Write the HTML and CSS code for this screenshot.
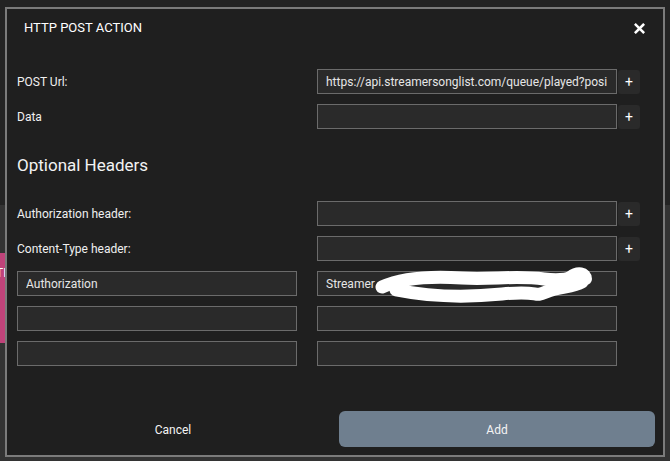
FILE: index.html
```html
<!DOCTYPE html>
<html lang="en">
<head>
<meta charset="utf-8">
<title>HTTP POST Action</title>
<link rel="stylesheet" href="styles.css">
</head>
<body>
<div class="backdrop">
  <div class="backdrop-top"></div>
  <div class="backdrop-tab">TI</div>
  <div class="backdrop-right"></div>
</div>

<div class="dialog">
  <div class="dialog-head">
    <span class="dialog-title">HTTP POST ACTION</span>
    <button class="close" type="button" aria-label="Close">
      <svg width="11" height="11" viewBox="0 0 11 11"><path d="M1.8 1.8 L9.2 9.2 M9.2 1.8 L1.8 9.2" stroke="#fff" stroke-width="2.6" stroke-linecap="square"/></svg>
    </button>
  </div>

  <div class="form">
    <div class="row">
      <label class="label">POST Url:</label>
      <input class="field" type="text" value="https://api.streamersonglist.com/queue/played?posi">
      <button class="plus" type="button">+</button>
    </div>
    <div class="row">
      <label class="label">Data</label>
      <input class="field" type="text" value="">
      <button class="plus" type="button">+</button>
    </div>

    <h2 class="section">Optional Headers</h2>

    <div class="row">
      <label class="label">Authorization header:</label>
      <input class="field" type="text" value="">
      <button class="plus" type="button">+</button>
    </div>
    <div class="row">
      <label class="label">Content-Type header:</label>
      <input class="field" type="text" value="">
      <button class="plus" type="button">+</button>
    </div>

    <div class="pair">
      <input class="field key" type="text" value="Authorization">
      <div class="value-wrap">
        <input class="field" type="text" value="Streamer">
        <svg class="redact" width="222" height="38" viewBox="0 0 222 38">
          <path d="M8 22 C28 13 58 11 88 13 S 140 10 170 14 S 198 8 210 12" fill="none" stroke="#fff" stroke-width="13" stroke-linecap="round" stroke-linejoin="round"/>
          <path d="M22 25 C52 31 88 33 128 29 S 158 33 172 27 S 198 23 208 17" fill="none" stroke="#fff" stroke-width="13" stroke-linecap="round" stroke-linejoin="round"/>
          <path d="M196 12 C204 6 212 8 212 14" fill="none" stroke="#fff" stroke-width="12" stroke-linecap="round"/>
        </svg>
      </div>
    </div>
    <div class="pair">
      <input class="field key" type="text" value="">
      <input class="field" type="text" value="">
    </div>
    <div class="pair">
      <input class="field key" type="text" value="">
      <input class="field" type="text" value="">
    </div>
  </div>

  <div class="actions">
    <button class="btn cancel" type="button">Cancel</button>
    <button class="btn add" type="button">Add</button>
  </div>
</div>
</body>
</html>
```

FILE: styles.css
```css
* {
  box-sizing: border-box;
}

html, body {
  margin: 0;
  padding: 0;
}

body {
  width: 670px;
  height: 461px;
  overflow: hidden;
  background: #333333;
  font-family: Roboto, "Liberation Sans", Arial, sans-serif;
  color: #f2f2f2;
  position: relative;
  padding: 7px 5px 0 5px;
}

/* page behind the modal */
.backdrop-top {
  position: absolute;
  left: 0;
  top: 0;
  width: 670px;
  height: 205px;
  background: #232323;
}

.backdrop-tab {
  position: absolute;
  left: 0;
  top: 253px;
  width: 5px;
  height: 90px;
  background: #c0437a;
  color: #fff;
  font-size: 12px;
  line-height: 40px;
  text-indent: -4px;
  white-space: nowrap;
  overflow: hidden;
}

.backdrop-right {
  position: absolute;
  right: 0;
  top: 240px;
  width: 5px;
  height: 221px;
  background: #333333;
}

.dialog {
  position: relative;
  width: 660px;
  height: 450px;
  border: 2px solid #7b7b7b;
  background: #1f1f1f;
  display: flex;
  flex-direction: column;
}

.dialog-head {
  display: flex;
  align-items: center;
  justify-content: space-between;
  height: 16px;
  margin: 11px 18px 0 17px;
}

.dialog-title {
  font-size: 13px;
  line-height: 16px;
  color: #ffffff;
}

.close {
  background: none;
  border: 0;
  padding: 0;
  width: 11px;
  height: 11px;
  display: flex;
}

.form {
  margin: 33px 0 0 10px;
  display: flex;
  flex-direction: column;
  gap: 10px;
}

.row {
  display: flex;
  align-items: center;
  height: 25px;
}

.label {
  width: 300px;
  font-size: 12px;
  color: #f0f0f0;
}

.field {
  width: 300px;
  height: 25px;
  border: 1px solid #6b6b6b;
  background: #2a2a2a;
  color: #e6e6e6;
  font-family: Roboto, "Liberation Sans", Arial, sans-serif;
  font-size: 12px;
  padding: 0 8px;
  outline: none;
}

.field.key {
  width: 280px;
  margin-right: 20px;
}

.plus {
  width: 22px;
  height: 24px;
  margin-left: 1px;
  border: 0;
  border-radius: 3px;
  background: #2a2a2a;
  color: #ffffff;
  font-family: Roboto, "Liberation Sans", Arial, sans-serif;
  font-size: 14px;
  font-weight: normal;
  line-height: 24px;
  padding: 0;
}

.section {
  margin: 16px 0 16px 0;
  font-size: 17px;
  font-weight: normal;
  line-height: 20px;
  color: #f2f2f2;
}

.pair {
  display: flex;
  height: 25px;
}

.value-wrap {
  position: relative;
  width: 300px;
  height: 25px;
}

.redact {
  position: absolute;
  left: 57px;
  top: -6px;
}

.actions {
  margin: 45px 0 0 10px;
  display: grid;
  grid-template-columns: 312px 316px;
  gap: 10px;
}

.btn {
  height: 36px;
  border: 0;
  border-radius: 6px;
  font-family: Roboto, "Liberation Sans", Arial, sans-serif;
  font-size: 12px;
  color: #f4f4f4;
  padding: 2px 0 0 0;
}

.cancel {
  background: transparent;
}

.add {
  background: #6f7f8f;
}
```
